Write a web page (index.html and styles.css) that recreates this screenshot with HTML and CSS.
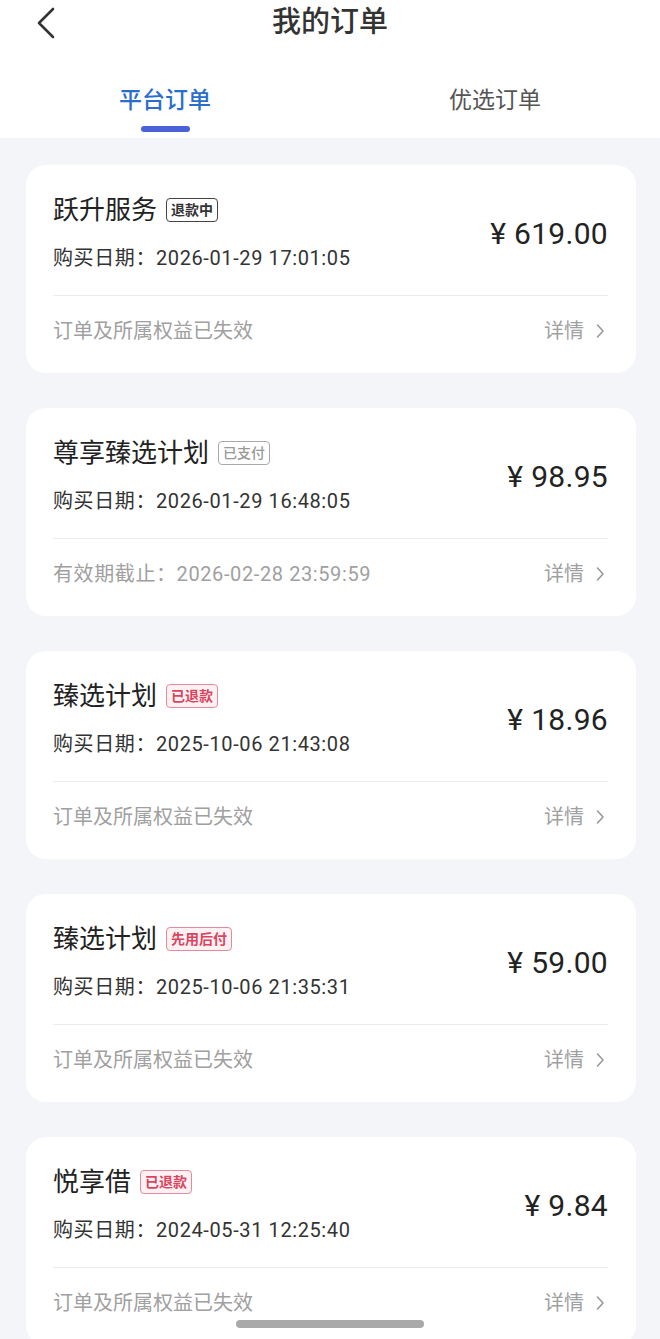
FILE: index.html
```html
<!DOCTYPE html>
<html lang="zh-CN">
<head>
    <meta charset="UTF-8">
    <meta name="viewport" content="width=device-width, initial-scale=1.0">
    <title>我的订单</title>
    <link rel="stylesheet" href="styles.css">
</head>
<body>
    <header class="top">
        <div class="nav">
            <svg class="back" width="24" height="34" viewBox="0 0 24 34">
                <polyline points="18,3 4,17 18,31" fill="none" stroke="#333" stroke-width="2.6" stroke-linecap="round" stroke-linejoin="round"/>
            </svg>
            <h1>我的订单</h1>
        </div>
        <div class="tabs">
            <div class="tab active"><span>平台订单</span><i class="bar"></i></div>
            <div class="tab"><span>优选订单</span><i class="bar"></i></div>
        </div>
    </header>

    <main class="list">
        <div class="card">
            <div class="card-top">
                <div class="info">
                    <div class="name">跃升服务<span class="tag tag-dark">退款中</span></div>
                    <div class="date">购买日期：2026-01-29 17:01:05</div>
                </div>
                <div class="price">¥ 619.00</div>
            </div>
            <div class="card-foot">
                <span>订单及所属权益已失效</span>
                <span class="more">详情<svg width="9" height="16" viewBox="0 0 9 16"><polyline points="1.5,2 7,8 1.5,14" fill="none" stroke="#999" stroke-width="1.6" stroke-linecap="round" stroke-linejoin="round"/></svg></span>
            </div>
        </div>

        <div class="card">
            <div class="card-top">
                <div class="info">
                    <div class="name">尊享臻选计划<span class="tag tag-gray">已支付</span></div>
                    <div class="date">购买日期：2026-01-29 16:48:05</div>
                </div>
                <div class="price">¥ 98.95</div>
            </div>
            <div class="card-foot">
                <span class="expire">有效期截止：2026-02-28 23:59:59</span>
                <span class="more">详情<svg width="9" height="16" viewBox="0 0 9 16"><polyline points="1.5,2 7,8 1.5,14" fill="none" stroke="#999" stroke-width="1.6" stroke-linecap="round" stroke-linejoin="round"/></svg></span>
            </div>
        </div>

        <div class="card">
            <div class="card-top">
                <div class="info">
                    <div class="name">臻选计划<span class="tag tag-red">已退款</span></div>
                    <div class="date">购买日期：2025-10-06 21:43:08</div>
                </div>
                <div class="price">¥ 18.96</div>
            </div>
            <div class="card-foot">
                <span>订单及所属权益已失效</span>
                <span class="more">详情<svg width="9" height="16" viewBox="0 0 9 16"><polyline points="1.5,2 7,8 1.5,14" fill="none" stroke="#999" stroke-width="1.6" stroke-linecap="round" stroke-linejoin="round"/></svg></span>
            </div>
        </div>

        <div class="card">
            <div class="card-top">
                <div class="info">
                    <div class="name">臻选计划<span class="tag tag-red">先用后付</span></div>
                    <div class="date">购买日期：2025-10-06 21:35:31</div>
                </div>
                <div class="price">¥ 59.00</div>
            </div>
            <div class="card-foot">
                <span>订单及所属权益已失效</span>
                <span class="more">详情<svg width="9" height="16" viewBox="0 0 9 16"><polyline points="1.5,2 7,8 1.5,14" fill="none" stroke="#999" stroke-width="1.6" stroke-linecap="round" stroke-linejoin="round"/></svg></span>
            </div>
        </div>

        <div class="card">
            <div class="card-top">
                <div class="info">
                    <div class="name">悦享借<span class="tag tag-red">已退款</span></div>
                    <div class="date">购买日期：2024-05-31 12:25:40</div>
                </div>
                <div class="price">¥ 9.84</div>
            </div>
            <div class="card-foot">
                <span>订单及所属权益已失效</span>
                <span class="more">详情<svg width="9" height="16" viewBox="0 0 9 16"><polyline points="1.5,2 7,8 1.5,14" fill="none" stroke="#999" stroke-width="1.6" stroke-linecap="round" stroke-linejoin="round"/></svg></span>
            </div>
        </div>
    </main>

    <div class="home-bar"></div>
</body>
</html>
```

FILE: styles.css
```css
html, body {
    margin: 0;
    padding: 0;
}
body {
    width: 660px;
    height: 1339px;
    overflow: hidden;
    position: relative;
    background: #f3f5f9;
    font-family: Roboto, "Noto Sans CJK SC", sans-serif;
    color: #222;
}
.top {
    background: #fff;
}
.nav {
    height: 46px;
    position: relative;
    display: flex;
    align-items: center;
    justify-content: center;
}
.back {
    position: absolute;
    left: 35px;
    top: 6px;
}
.nav h1 {
    margin: 0;
    font-size: 29px;
    font-weight: 500;
    color: #333;
    line-height: 36px;
    margin-top: -2px;
}
.tabs {
    display: flex;
    padding-top: 40px;
    padding-bottom: 6px;
}
.tab {
    flex: 1;
    display: flex;
    flex-direction: column;
    align-items: center;
    font-size: 23px;
    line-height: 30px;
    color: #555;
}
.tab .bar {
    width: 49px;
    height: 6px;
    border-radius: 3px;
    margin-top: 10px;
    background: transparent;
}
.tab.active {
    color: #2a6ecb;
    font-weight: 500;
}
.tab.active .bar {
    background: #4a62d8;
}
.list {
    display: flex;
    flex-direction: column;
    gap: 35px;
    padding: 27px 24px 0 26px;
}
.card {
    background: #fff;
    border-radius: 20px;
    padding: 0 28px 0 27px;
}
.card-top {
    display: flex;
    align-items: center;
    justify-content: space-between;
    padding: 30px 0 24px;
    border-bottom: 1px solid #ececec;
}
.name {
    display: flex;
    align-items: center;
    font-size: 26px;
    line-height: 30px;
    color: #222;
}
.tag {
    margin-left: 9px;
    font-size: 14px;
    line-height: 20px;
    padding: 1px 4px;
    border: 1px solid;
    border-radius: 4px;
    font-weight: 500;
}
.tag-dark {
    color: #333;
    border-color: #444;
    font-weight: 700;
}
.tag-gray {
    color: #999;
    border-color: #aaa;
}
.tag-red {
    color: #d9455f;
    border-color: #e58a9b;
    background: #fdf1f3;
    font-weight: 700;
}
.date {
    margin-top: 20px;
    font-size: 20px;
    line-height: 26px;
    color: #333;
    letter-spacing: 0.6px;
}
.price {
    font-size: 30px;
    font-weight: 400;
    color: #222;
    white-space: nowrap;
    letter-spacing: 0.3px;
}
.card-foot {
    display: flex;
    justify-content: space-between;
    align-items: center;
    padding: 23px 0 30px;
    font-size: 20px;
    line-height: 24px;
    color: #a0a0a0;
}
.expire {
    letter-spacing: 0.6px;
}
.more {
    display: flex;
    align-items: center;
    gap: 12px;
    padding-right: 3px;
}
.home-bar {
    position: absolute;
    left: 236px;
    bottom: 11px;
    width: 188px;
    height: 8px;
    border-radius: 4px;
    background: #a9a9a9;
}
```
